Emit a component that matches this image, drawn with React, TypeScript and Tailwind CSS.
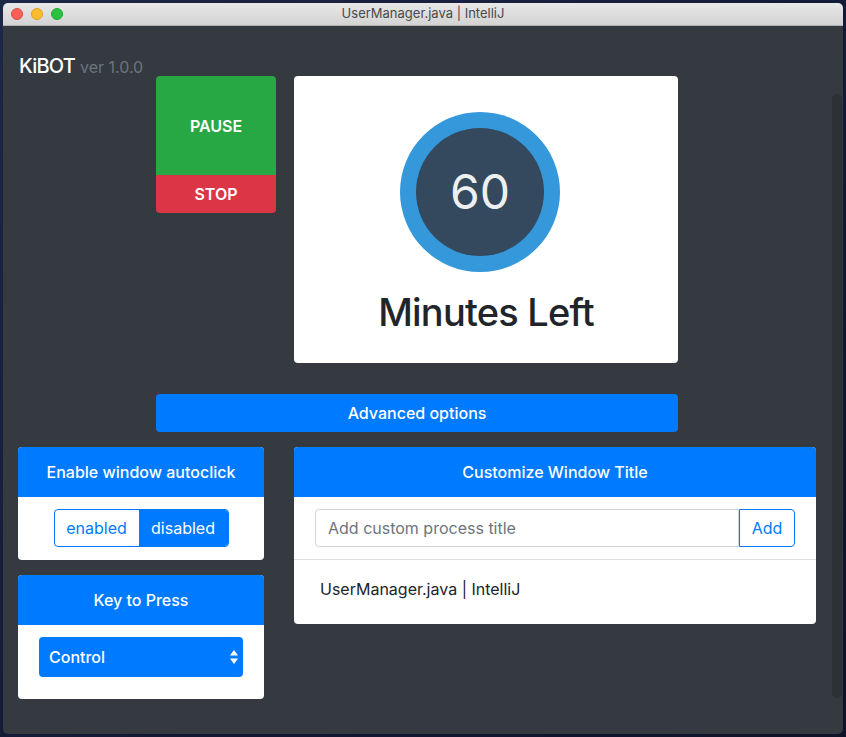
import React from 'react'

const font = "font-['Inter','Noto_Sans','Liberation_Sans',sans-serif]"

const TitleBar = () => {
  return (
    <div className="relative h-[23px] flex items-center pl-[8px] gap-[8px] bg-gradient-to-b from-[#e8e8e8] to-[#d3d3d3] border-b border-[#b1b1b1]">
      <span className="w-[12px] h-[12px] rounded-full bg-[#fc5f57] border border-[#de4a42]" />
      <span className="w-[12px] h-[12px] rounded-full bg-[#fdbb2e] border border-[#dea123]" />
      <span className="w-[12px] h-[12px] rounded-full bg-[#29c33f] border border-[#1eaa31]" />
      <p className="absolute inset-0 flex items-center justify-center text-[13px] text-[#4a4a4a]">UserManager.java | IntelliJ</p>
    </div>
  )
}

const CardHeader = ({ title }: { title: string }) => {
  return (
    <div className="h-[50px] bg-[#007bff] rounded-t-[4px] flex items-center justify-center text-white text-[16px] font-medium">
      {title}
    </div>
  )
}

const SelectArrows = () => {
  return (
    <svg width="8" height="14" viewBox="0 0 8 14" fill="white">
      <path d="M4 0 L8 5.5 L0 5.5 Z" />
      <path d="M0 8.5 L8 8.5 L4 14 Z" />
    </svg>
  )
}

const App = () => {
  return (
    <div className={`w-[846px] h-[737px] pt-[3px] pl-[3px] bg-gradient-to-br from-[#1d2747] via-[#141b36] to-[#0e1329] ${font}`}>
      <div className="w-[840px] h-[731px] rounded-[5px] overflow-hidden flex flex-col">
        <TitleBar />
        <div className="flex-1 bg-[#343a40] flex">
          <div className="w-[829px] flex flex-col">
            <div className="h-[50px] pt-[30px] pl-[16px] leading-[20px]">
              <span className="text-white text-[20px] font-medium tracking-[-0.8px]">KiBOT</span>
              <span className="text-[#6c757d] text-[16px] ml-[5px]">ver 1.0.0</span>
            </div>

            <div className="flex pl-[153px] gap-[18px]">
              <div className="w-[120px] h-[137px] flex flex-col rounded-[4px] overflow-hidden text-white text-[16px] font-semibold">
                <button className="h-[99px] bg-[#28a745] flex items-center justify-center">PAUSE</button>
                <button className="h-[38px] bg-[#dc3545] flex items-center justify-center">STOP</button>
              </div>
              <div className="w-[384px] h-[287px] bg-white rounded-[4px] flex flex-col items-center">
                <div className="mt-[36px] mr-[12px] w-[160px] h-[160px] rounded-full bg-[#3498db] flex items-center justify-center">
                  <div className="w-[128px] h-[128px] rounded-full bg-[#34495e] flex items-center justify-center text-[#ecf0f1] text-[48px] leading-none">
                    60
                  </div>
                </div>
                <h1 className="mt-[17px] text-[38px] leading-[46px] font-medium text-[#212529] tracking-[-0.8px]">Minutes Left</h1>
              </div>
            </div>

            <button className="mt-[31px] ml-[153px] w-[522px] h-[38px] rounded-[4px] bg-[#007bff] text-white text-[16px] font-medium">
              Advanced options
            </button>

            <div className="mt-[15px] pl-[15px] flex gap-[30px] items-start">
              <div className="w-[246px] flex flex-col gap-[15px]">
                <div className="bg-white rounded-[4px]">
                  <CardHeader title="Enable window autoclick" />
                  <div className="pt-[12px] pb-[13px] flex justify-center">
                    <div className="flex h-[38px] rounded-[4px] border border-[#007bff] overflow-hidden text-[16px]">
                      <button className="w-[84px] text-[#007bff]">enabled</button>
                      <button className="w-[89px] bg-[#007bff] text-white">disabled</button>
                    </div>
                  </div>
                </div>
                <div className="bg-white rounded-[4px]">
                  <CardHeader title="Key to Press" />
                  <div className="pt-[12px] pb-[22px] px-[21px]">
                    <div className="h-[40px] rounded-[4px] bg-[#007bff] flex items-center justify-between pl-[10px] pr-[5px] text-white text-[16px] font-medium">
                      <span>Control</span>
                      <SelectArrows />
                    </div>
                  </div>
                </div>
              </div>

              <div className="w-[522px] bg-white rounded-[4px]">
                <CardHeader title="Customize Window Title" />
                <div className="py-[12px] px-[21px] border-b border-[#dfdfdf] flex">
                  <input
                    className="flex-1 h-[38px] px-[12px] border border-[#ced4da] rounded-l-[4px] text-[16px] text-[#495057] placeholder:text-[#6c757d] outline-none"
                    placeholder="Add custom process title"
                  />
                  <button className="w-[56px] h-[38px] border border-[#007bff] rounded-r-[4px] text-[#007bff] text-[16px]">Add</button>
                </div>
                <div className="h-[64px] pb-[6px] pl-[26px] flex items-center text-[16px] text-[#212529]">
                  UserManager.java | IntelliJ
                </div>
              </div>
            </div>
          </div>
          <div className="flex-1 pt-[68px] pb-[36px]">
            <div className="h-full w-[10px] rounded-full bg-[#2c3136]" />
          </div>
        </div>
      </div>
    </div>
  )
}

export default App
